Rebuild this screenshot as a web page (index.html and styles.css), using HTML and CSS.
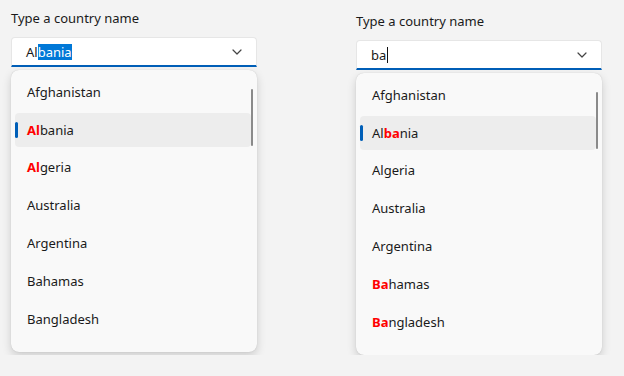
FILE: index.html
```html
<!DOCTYPE html>
<html lang="en">
<head>
  <meta charset="UTF-8">
  <title>Country combo box</title>
  <link rel="stylesheet" href="styles.css">
</head>
<body>
  <main class="demo">
    <section class="combo">
      <label class="combo-label">Type a country name</label>
      <div class="combo-input">
        <span class="combo-text">Al<span class="sel">bania</span></span>
        <svg class="chev" width="10" height="6" viewBox="0 0 10 6"><path d="M1 1l4 4 4-4" fill="none" stroke="#444" stroke-width="1.2" stroke-linecap="round" stroke-linejoin="round"/></svg>
      </div>
      <div class="combo-list">
        <div class="scroll"></div>
        <div class="item">Afghanistan</div>
        <div class="item active"><b>Al</b>bania</div>
        <div class="item"><b>Al</b>geria</div>
        <div class="item">Australia</div>
        <div class="item">Argentina</div>
        <div class="item">Bahamas</div>
        <div class="item">Bangladesh</div>
      </div>
    </section>

    <section class="combo second">
      <label class="combo-label">Type a country name</label>
      <div class="combo-input">
        <span class="combo-text">ba<span class="caret"></span></span>
        <svg class="chev" width="10" height="6" viewBox="0 0 10 6"><path d="M1 1l4 4 4-4" fill="none" stroke="#444" stroke-width="1.2" stroke-linecap="round" stroke-linejoin="round"/></svg>
      </div>
      <div class="combo-list">
        <div class="scroll"></div>
        <div class="item">Afghanistan</div>
        <div class="item active">Al<b>ba</b>nia</div>
        <div class="item">Algeria</div>
        <div class="item">Australia</div>
        <div class="item">Argentina</div>
        <div class="item"><b>Ba</b>hamas</div>
        <div class="item"><b>Ba</b>ngladesh</div>
      </div>
    </section>
  </main>
</body>
</html>
```

FILE: styles.css
```css
body {
  margin: 0;
  background-color: #f3f3f3;
  font-family: "Noto Sans", sans-serif;
  font-size: 13px;
  color: #1a1a1a;
}

.demo {
  display: flex;
  gap: 99px;
  padding: 9px 0 0 11px;
}

.combo {
  width: 246px;
}

.combo.second {
  margin-top: 3px;
}

.combo-label {
  display: block;
  height: 28px;
  line-height: 18px;
}

.combo-input {
  height: 27px;
  background-color: #fff;
  border: 1px solid #e6e6e6;
  border-bottom: 2px solid #005fb8;
  border-radius: 4px 4px 0 0;
  display: flex;
  align-items: center;
  justify-content: space-between;
  padding: 0 14px 0 14px;
}

.combo-text {
  display: flex;
  align-items: center;
  line-height: 16px;
}

.sel {
  background-color: #0078d7;
  color: #fff;
  line-height: 16px;
}

.caret {
  display: inline-block;
  width: 1px;
  height: 16px;
  background-color: #111;
  margin-left: 1px;
}

.combo-list {
  position: relative;
  margin-top: 3px;
  height: 282px;
  overflow: hidden;
  background-color: #f9f9f9;
  border-radius: 8px;
  box-shadow: 0 4px 10px rgba(0, 0, 0, 0.16), 0 0 1px rgba(0, 0, 0, 0.2);
  padding-top: 3px;
  box-sizing: border-box;
  display: flex;
  flex-direction: column;
}

.scroll {
  position: absolute;
  right: 4px;
  top: 19px;
  width: 2px;
  height: 57px;
  background-color: #8a8a8a;
  border-radius: 1px;
}

.item {
  position: relative;
  flex: none;
  height: 33.8px;
  margin: 2px 6px 2px 4px;
  padding-left: 12px;
  display: flex;
  align-items: center;
  border-radius: 4px;
}

.item b {
  color: #ff0000;
}

.item.active {
  background-color: #ededed;
}

.item.active::before {
  content: "";
  position: absolute;
  left: 0;
  top: 9px;
  width: 3px;
  height: 16px;
  border-radius: 2px;
  background-color: #005fb8;
}
```
